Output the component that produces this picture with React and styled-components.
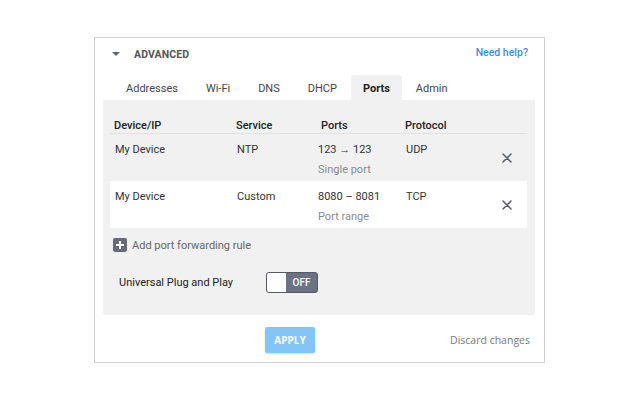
import React from "react"
import styled, { createGlobalStyle } from 'styled-components'

const Global = createGlobalStyle`
body {
  margin: 0;
  background: #fff;
  font-family: Roboto, "Liberation Sans", sans-serif;
}
`;

const tabs = ['Addresses', 'Wi-Fi', 'DNS', 'DHCP', 'Ports', 'Admin'];

const rules = [
    { device: 'My Device', service: 'NTP', ports: '123 \u2192 123', kind: 'Single port', proto: 'UDP' },
    { device: 'My Device', service: 'Custom', ports: '8080 \u2013 8081', kind: 'Port range', proto: 'TCP', white: true },
];

const CloseIcon = () => (
    <svg width="10" height="10" viewBox="0 0 10 10">
        <path d="M1 1 L9 9 M9 1 L1 9" stroke="#555b66" strokeWidth="1.5" strokeLinecap="round" />
    </svg>
)

const App = () => {
    return (
        <Card>
            <Global />
            <Header>
                <Caret />
                <Heading>ADVANCED</Heading>
                <Help>Need help?</Help>
            </Header>
            <Tabs>
                {tabs.map(t => <Tab key={t} active={t === 'Ports'}>{t}</Tab>)}
            </Tabs>
            <Panel>
                <Table>
                    <HeadRow>
                        <Th>Device/IP</Th>
                        <Th>Service</Th>
                        <Th shift>Ports</Th>
                        <Th>Protocol</Th>
                        <span />
                    </HeadRow>
                    {rules.map((r, i) => (
                        <Row key={i} white={r.white}>
                            <Cell>{r.device}</Cell>
                            <Cell>{r.service}</Cell>
                            <Cell>
                                {r.ports}
                                <Sub>{r.kind}</Sub>
                            </Cell>
                            <Cell>{r.proto}</Cell>
                            <Remove><CloseIcon /></Remove>
                        </Row>
                    ))}
                </Table>
                <AddRule>
                    <PlusBox>
                        <svg width="10" height="10" viewBox="0 0 10 10">
                            <path d="M5 1 V9 M1 5 H9" stroke="#fff" strokeWidth="2" />
                        </svg>
                    </PlusBox>
                    Add port forwarding rule
                </AddRule>
                <Upnp>
                    <UpnpLabel>Universal Plug and Play</UpnpLabel>
                    <Toggle>
                        <Knob />
                        <ToggleText>OFF</ToggleText>
                    </Toggle>
                </Upnp>
            </Panel>
            <Footer>
                <Apply>APPLY</Apply>
                <Discard>Discard changes</Discard>
            </Footer>
        </Card>
    )
}

export default App;

const Card = styled.div`
width: 449px;
height: 324px;
margin-left: 94px;
margin-top: 37px;
border: 1px solid #cfcfcf;
display: flex;
flex-direction: column;
`;

const Header = styled.div`
height: 32px;
display: flex;
align-items: center;
padding: 0 16px 0 17px;
`;

const Caret = styled.div`
width: 0;
height: 0;
border-left: 4px solid transparent;
border-right: 4px solid transparent;
border-top: 4px solid #5d6474;
margin-right: 14px;
`;

const Heading = styled.div`
font-size: 10.5px;
font-weight: 700;
color: #555;
letter-spacing: 0.1px;
`;

const Help = styled.div`
margin-left: auto;
margin-top: -3px;
font-size: 10.5px;
font-weight: 500;
color: #3f8de4;
`;

const Tabs = styled.div`
display: flex;
height: 25px;
margin-top: 5px;
padding-left: 17px;
`;

const Tab = styled.div`
padding: 1px ${p => p.active ? 12 : 14}px 0;
display: flex;
align-items: center;
font-size: 11px;
font-weight: ${p => p.active ? 700 : 400};
color: ${p => p.active ? '#222' : '#444'};
background: ${p => p.active ? '#f1f1f1' : 'transparent'};
border-radius: 3px 3px 0 0;
`;

const Panel = styled.div`
margin: 0 9px 0 8px;
background: #f1f1f1;
border-radius: 0 0 3px 3px;
padding: 0 8px 22px 7px;
`;

const Table = styled.div`
display: flex;
flex-direction: column;
`;

const grid = `
display: grid;
grid-template-columns: 122px 81px 88px 1fr 30px;
padding: 0 5px;
`;

const HeadRow = styled.div`
${grid}
height: 34px;
box-sizing: border-box;
padding-top: 19px;
border-bottom: 1px solid #e2e2e2;
`;

const Th = styled.div`
font-size: 11px;
line-height: 14px;
font-weight: 500;
color: #222;
margin-left: ${p => p.shift ? 3 : -1}px;
`;

const Row = styled.div`
${grid}
height: 47px;
box-sizing: border-box;
padding-top: 9px;
background: ${p => p.white ? '#fff' : 'transparent'};
`;

const Cell = styled.div`
font-size: 11px;
line-height: 14px;
color: #333;
`;

const Sub = styled.div`
margin-top: 6px;
color: #8a8a8a;
`;

const Remove = styled.div`
display: flex;
align-items: center;
justify-content: center;
margin-top: -9px;
`;

const AddRule = styled.div`
display: flex;
align-items: center;
margin-top: 10px;
height: 14px;
padding-left: 3px;
font-size: 11px;
color: #666;
`;

const PlusBox = styled.div`
width: 14px;
height: 14px;
border-radius: 2px;
background: #646b7b;
display: flex;
align-items: center;
justify-content: center;
margin-right: 5px;
`;

const Upnp = styled.div`
display: flex;
align-items: center;
margin-top: 20px;
height: 21px;
padding-left: 9px;
`;

const UpnpLabel = styled.div`
width: 147px;
font-size: 11px;
color: #222;
`;

const Toggle = styled.div`
width: 52px;
height: 21px;
box-sizing: border-box;
border: 1px solid #555b66;
border-radius: 3px;
display: flex;
overflow: hidden;
background: #6a7283;
`;

const Knob = styled.div`
width: 19px;
background: #fff;
`;

const ToggleText = styled.div`
flex: 1;
display: flex;
align-items: center;
justify-content: center;
font-size: 10px;
font-weight: 500;
color: #fff;
`;

const Footer = styled.div`
display: flex;
align-items: flex-start;
padding: 12px 14px 0 170px;
`;

const Apply = styled.div`
width: 50px;
height: 26px;
display: flex;
align-items: center;
justify-content: center;
background: #84c5f8;
border-radius: 2px;
box-shadow: 0 1px 2px rgba(0,0,0,0.15);
font-family: "Open Sans", sans-serif;
font-size: 10px;
font-weight: 700;
color: #fff;
`;

const Discard = styled.div`
margin-left: auto;
margin-top: 6px;
font-family: "Open Sans", sans-serif;
font-size: 10.5px;
color: #777;
`;
